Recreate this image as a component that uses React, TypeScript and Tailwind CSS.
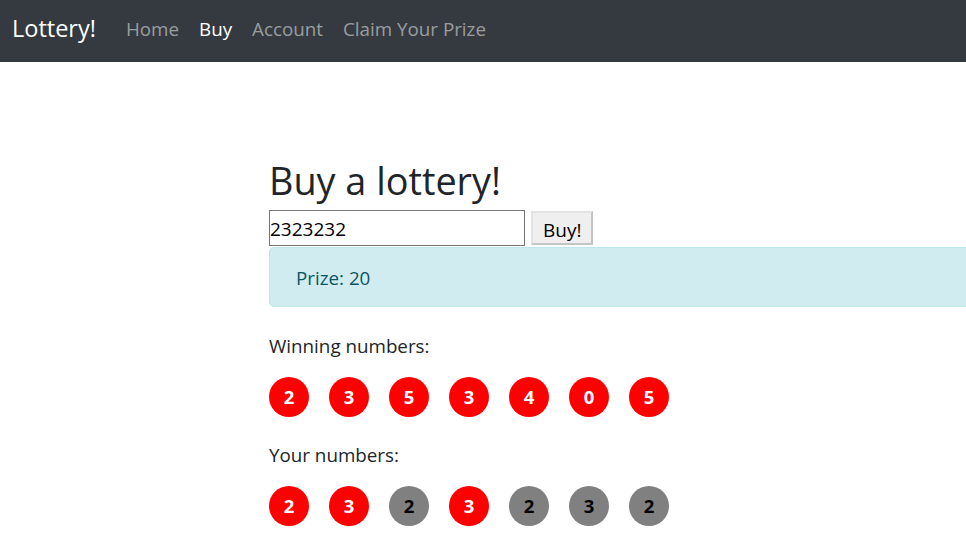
import React from "react";

const winning = [2, 3, 5, 3, 4, 0, 5];
const yours = [2, 3, 2, 3, 2, 3, 2];

function Ball({ value, hit }: { value: number; hit: boolean }) {
  return (
    <div
      className={`w-10 h-10 mr-5 rounded-full flex items-center justify-center font-bold text-[18.5px] ${
        hit ? "bg-[#ff0000] text-white" : "bg-[#808080] text-black"
      }`}
    >
      {value}
    </div>
  );
}

export default function App() {
  return (
    <div className="min-h-[536px] bg-white overflow-hidden font-['Open_Sans',sans-serif] text-[#212529]">
      <nav className="h-[62px] bg-[#343a40] flex items-center pl-3 pb-1">
        <span className="text-[23.5px] text-white mr-[20px]">Lottery!</span>
        <ul className="flex text-[18.8px]">
          <li className="px-[10px] text-white/50">Home</li>
          <li className="px-[10px] text-white">Buy</li>
          <li className="px-[10px] text-white/50">Account</li>
          <li className="px-[10px] text-white/50">Claim Your Prize</li>
        </ul>
      </nav>

      <main className="pl-[269px] pt-[89px]">
        <h1 className="text-[37.8px] leading-[59px] font-normal">Buy a lottery!</h1>
        <div className="flex items-center h-9">
          <input
            defaultValue="2323232"
            className="w-[256px] h-9 border border-[#767676] px-0 pt-[2px] text-[19px] text-black outline-none"
          />
          <button className="ml-[6px] h-[34px] px-[10px] pt-[3px] bg-[#efefef] border-2 border-[#c4c4c4] border-t-[#e3e3e3] border-l-[#e3e3e3] text-[19px] text-black">
            Buy!
          </button>
        </div>
        <div className="mt-px w-[760px] h-[60px] flex items-center pl-[26px] pt-[2px] bg-[#d1ecf1] border border-[#bee5eb] rounded-[5px] text-[#0c5460] text-[18.8px]">
          Prize: 20
        </div>

        <p className="mt-[25px] text-[18.8px] leading-[29px]">Winning numbers:</p>
        <div className="flex mt-4">
          {winning.map((n, i) => (
            <Ball key={i} value={n} hit />
          ))}
        </div>
        <p className="mt-[24px] text-[18.8px] leading-[29px]">Your numbers:</p>
        <div className="flex mt-4">
          {yours.map((n, i) => (
            <Ball key={i} value={n} hit={n === winning[i]} />
          ))}
        </div>
      </main>
    </div>
  );
}
